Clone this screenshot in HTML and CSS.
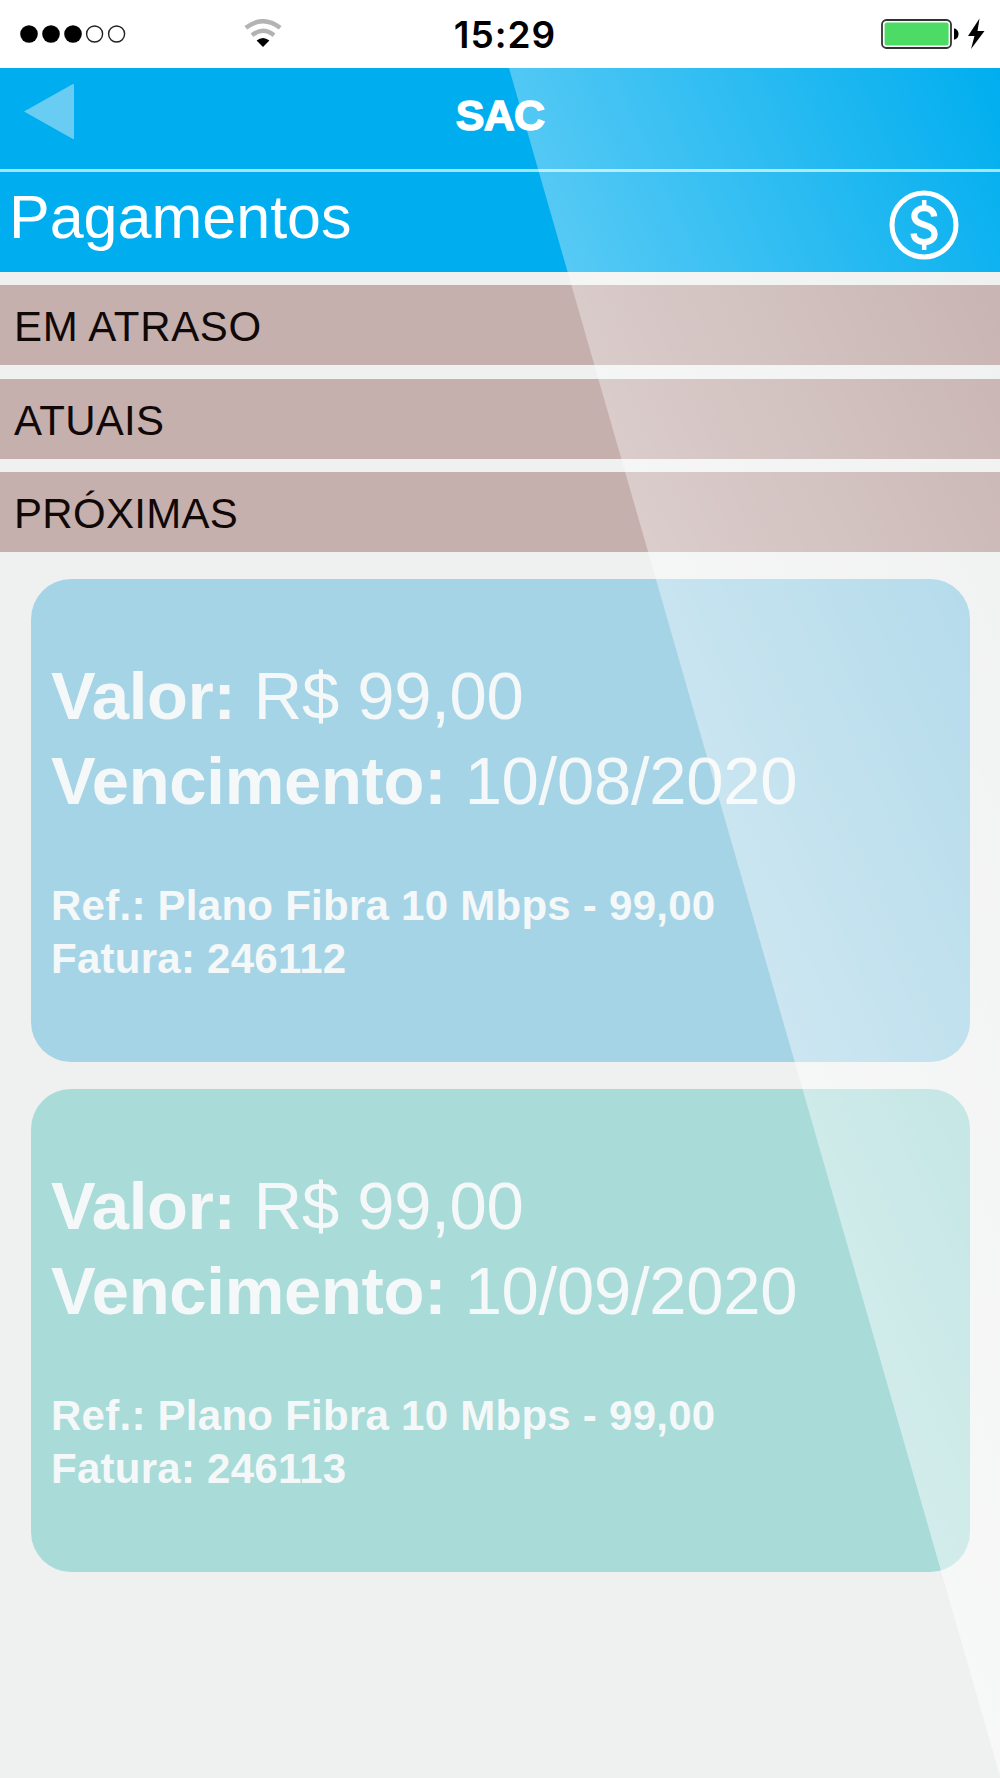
FILE: index.html
```html
<!DOCTYPE html>
<html lang="pt-BR">
  <head>
    <meta charset="UTF-8">
    <title>SAC - Pagamentos</title>
    <link rel="stylesheet" href="styles.css">
  </head>
  <body>
    <div class="screen">
      <div class="status-bar">
        <div class="status-left">
          <svg class="signal" width="108" height="20" viewBox="0 0 108 20">
            <circle cx="9" cy="10" r="8.8"/>
            <circle cx="31" cy="10" r="8.8"/>
            <circle cx="53" cy="10" r="8.8"/>
            <circle class="empty" cx="74.6" cy="10" r="8"/>
            <circle class="empty" cx="96.6" cy="10" r="8"/>
          </svg>
          <svg class="wifi" width="38" height="30" viewBox="0 0 38 30">
            <path class="wave" d="M1.8 8.8 Q19 -4.4 36.2 8.8"/>
            <path class="wave" d="M8 16.2 Q19 7.4 30 16.2"/>
            <path d="M12.6 21.6 Q19 16.4 25.4 21.6 L19 28 Z"/>
          </svg>
        </div>
        <div class="clock">15:29</div>
        <div class="status-right">
          <svg width="104" height="32" viewBox="0 0 104 32">
            <rect class="battery-case" x="1" y="2" width="69" height="28" rx="4.5"/>
            <rect class="battery-level" x="3.6" y="4.6" width="64" height="23" rx="2.5"/>
            <path d="M73 10.5 H74 Q77.5 12 77.5 16 Q77.5 20 74 21.5 H73 Z"/>
            <path d="M98.5 .5 L87 18 H93.5 L90 31 L103.5 13 H96.5 Z"/>
          </svg>
        </div>
      </div>

      <div class="header">
        <svg class="back" width="51" height="57" viewBox="0 0 51 57">
          <path d="M0 28.5 L49 1 Q50 .5 50 2 V55 Q50 56.5 49 56 Z"/>
        </svg>
        <h1 class="header-title">SAC</h1>
      </div>

      <div class="page-title">
        <h2>Pagamentos</h2>
        <svg class="money" width="70" height="70" viewBox="0 0 70 70">
          <circle cx="35" cy="35" r="32"/>
          <path d="M45.2 26.5 C44.7 21.5 41 18.2 35.2 18.2 C29.5 18.2 25.4 21.3 25.4 26 C25.4 31 29 32.8 35.2 34.7 C42 36.6 45.6 39 45.6 44 C45.6 48.8 41.4 52 35.3 52 C29 52 25 48.6 24.6 43.5"/>
          <path class="bar" d="M35.2 10 V18 M35.2 52 V60"/>
        </svg>
      </div>

      <div class="groups">
        <div class="group">EM ATRASO</div>
        <div class="group">ATUAIS</div>
        <div class="group">PRÓXIMAS</div>
      </div>

      <div class="cards">
        <div class="card card-blue">
          <p class="line"><b>Valor:</b> R$ 99,00</p>
          <p class="line"><b>Vencimento:</b> 10/08/2020</p>
          <div class="details">
            <p>Ref.: Plano Fibra 10 Mbps - 99,00</p>
            <p>Fatura: 246112</p>
          </div>
        </div>
        <div class="card card-green">
          <p class="line"><b>Valor:</b> R$ 99,00</p>
          <p class="line"><b>Vencimento:</b> 10/09/2020</p>
          <div class="details">
            <p>Ref.: Plano Fibra 10 Mbps - 99,00</p>
            <p>Fatura: 246113</p>
          </div>
        </div>
      </div>

      <!-- glass reflection over the app -->
      <svg class="shine" width="1000" height="1778" viewBox="0 0 1000 1778">
        <defs>
          <linearGradient id="shine" gradientUnits="userSpaceOnUse" x1="329.5" y1="287.8" x2="969" y2="0">
            <stop offset="0" stop-color="#fff" stop-opacity=".5"/>
            <stop offset="1" stop-color="#fff" stop-opacity="0"/>
          </linearGradient>
        </defs>
        <polygon points="509,68 1000,68 1000,1776" fill="url(#shine)"/>
      </svg>
    </div>
  </body>
</html>
```

FILE: styles.css
```css
* {
  box-sizing: border-box;
  margin: 0;
  padding: 0;
}
body {
  font-family: "Liberation Sans", Arial, sans-serif;
  background-color: #eff1f0;
}
svg {
  display: block;
}
.screen {
  position: relative;
  width: 1000px;
  height: 1778px;
  overflow: hidden;
}
.status-bar {
  display: grid;
  grid-template-columns: 1fr auto 1fr;
  align-items: center;
  height: 68px;
  padding: 0 15px 0 20px;
  background-color: #fff;
}
.status-left {
  display: flex;
  align-items: center;
  gap: 116px;
}
.signal .empty {
  fill: none;
  stroke: #222;
  stroke-width: 1.4;
}
.wifi .wave {
  fill: none;
  stroke: #b3b3b3;
  stroke-width: 4.4;
}
.clock {
  padding-left: 5px;
  font-family: Inter, sans-serif;
  font-size: 37px;
  font-weight: 600;
  letter-spacing: 1px;
}
.status-right {
  display: flex;
  justify-content: flex-end;
}
.battery-case {
  fill: #fff;
  stroke: #333;
  stroke-width: 1.8;
}
.battery-level {
  fill: #4cdb64;
}
.header {
  display: grid;
  grid-template-columns: 1fr auto 1fr;
  align-items: start;
  height: 104px;
  padding: 15px 24px 0;
  background-color: #00aeef;
  border-bottom: 3px solid #a3e4f8;
}
.back {
  fill: #69cdf3;
}
.header-title {
  color: #fff;
  font-size: 43px;
  line-height: 64px;
  letter-spacing: -0.7px;
  -webkit-text-stroke: 1.4px #fff;
}
.page-title {
  display: flex;
  justify-content: space-between;
  height: 100px;
  padding: 18px 41px 0 9px;
  background-color: #00aeef;
}
.page-title h2 {
  color: #fff;
  font-size: 61px;
  font-weight: normal;
  line-height: 54px;
}
.money {
  fill: none;
  stroke: #fff;
  stroke-width: 5;
}
.money path {
  stroke-width: 6.2;
}
.money .bar {
  stroke-width: 4.5;
}
.groups {
  display: flex;
  flex-direction: column;
  gap: 13.5px;
  padding-top: 13px;
}
.group {
  height: 80px;
  padding-left: 14px;
  background-color: #c5b0ae;
  color: #110808;
  font-size: 42px;
  line-height: 83px;
  letter-spacing: 0.3px;
}
.group:first-child {
  letter-spacing: 0.65px;
}
.cards {
  display: flex;
  flex-direction: column;
  gap: 27px;
  padding: 27px 30px 0 31px;
}
.card {
  height: 483px;
  padding: 74px 20px 0;
  border-radius: 40px;
  color: #f5f8f8;
}
.card-blue {
  background-color: #a6d4e7;
}
.card-green {
  background-color: #a9dbd9;
}
.line {
  font-size: 67px;
  line-height: 85px;
  letter-spacing: -0.28px;
  white-space: nowrap;
}
.details {
  margin-top: 56px;
  font-size: 42px;
  font-weight: bold;
  line-height: 53px;
  letter-spacing: 0.26px;
}
.shine {
  position: absolute;
  top: 0;
  left: 0;
}
```
